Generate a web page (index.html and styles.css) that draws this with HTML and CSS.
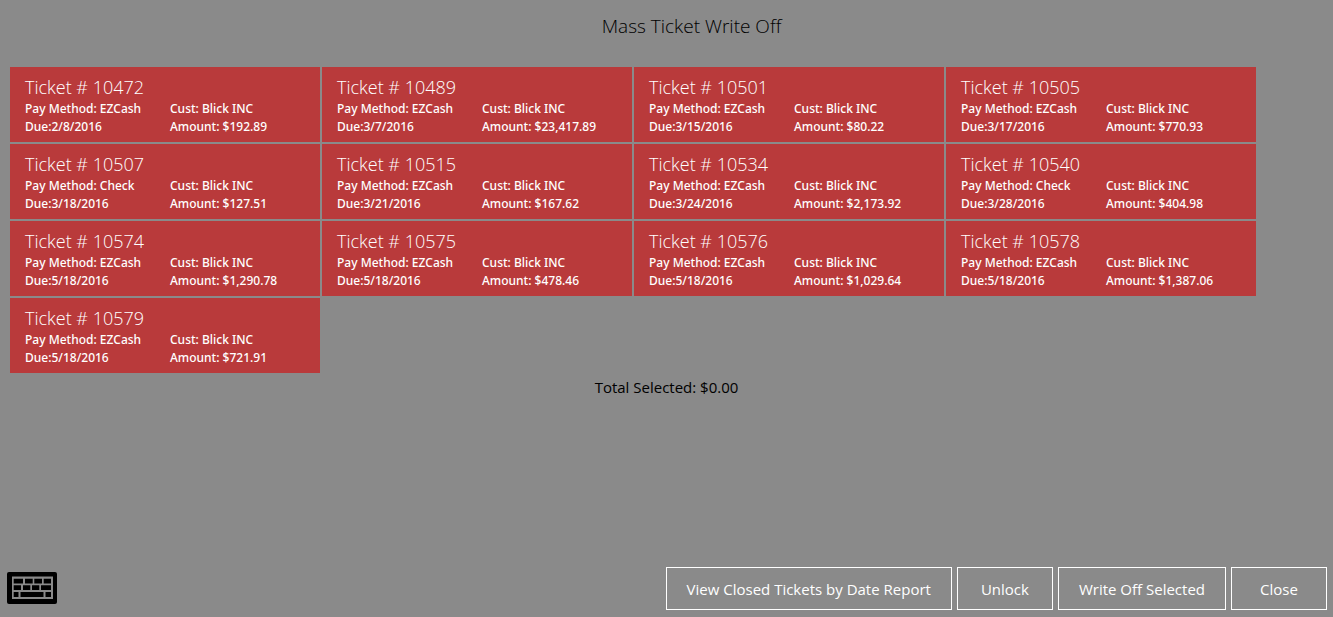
FILE: index.html
```html
<!DOCTYPE html>
<html lang="en">
<head>
    <meta charset="UTF-8">
    <meta name="viewport" content="width=device-width, initial-scale=1.0">
    <title>Mass Ticket Write Off</title>
    <link rel="stylesheet" href="styles.css">
</head>
<body>

<h1>Mass Ticket Write Off</h1>

<main>
    <div class="tickets" id="tickets"></div>
    <p class="total">Total Selected: <span id="total">$0.00</span></p>
</main>

<footer>
    <button class="keyboard" aria-label="Show keyboard">
        <svg width="50" height="32" viewBox="0 0 50 32">
            <rect width="50" height="32" rx="2" fill="#000"/>
            <rect x="5" y="4.500" width="41" height="22.500" fill="#8a8a8a"/>
            <path fill="#000" d="M6.700 6.700H16v4.800H6.700z M18 6.700h7.700v4.800H18z M27.300 6.700H35v4.800h-7.700z M36.700 6.700h7.300v4.800h-7.300z
                M6.700 13.300H14V18H6.700z M16 13.300h7.300V18H16z M25 13.300h7.300V18H25z M34 13.300h10V18H34z
                M6.700 20h4.800v5H6.700z M13.500 20h23v5h-23z M38.500 20H44v5h-5.500z"/>
        </svg>
    </button>
    <div class="actions">
        <button>View Closed Tickets by Date Report</button>
        <button id="unlock">Unlock</button>
        <button>Write Off Selected</button>
        <button>Close</button>
    </div>
</footer>

<script src="script.js"></script>
</body>
</html>
```
FILE: styles.css
```css
* {
    box-sizing: border-box;
}
body {
    display: flex;
    flex-direction: column;
    min-height: 100vh;
    margin: 0;
    background-color: #8a8a8a;
    color: #000;
    font-family: "Segoe UI", "Open Sans", sans-serif;
}
h1 {
    margin: 0;
    padding: 12px 0 27px 50px;
    font-size: 19px;
    font-weight: 300;
    line-height: 28px;
    text-align: center;
}
main {
    flex: 1;
    padding: 0 10px;
}
button {
    border: none;
    background: none;
    color: #fff;
    font-family: inherit;
    cursor: pointer;
}
.tickets {
    display: grid;
    grid-template-columns: repeat(auto-fill, 310px);
    gap: 2px;
}
.ticket {
    display: grid;
    grid-template-columns: 145px 1fr;
    padding: 7px 0 6px 15px;
    background-color: #b93a3b;
    font-family: "Segoe UI", "Noto Sans", sans-serif;
    font-size: 12px;
    font-weight: 500;
    line-height: 18px;
    text-align: left;
    white-space: nowrap;
}
.ticket.selected {
    outline: 2px solid #fff;
}
.ticket .number {
    grid-column: 1 / -1;
    font-family: "Segoe UI", "Open Sans", sans-serif;
    font-size: 18px;
    font-weight: 300;
    line-height: 26px;
}
.total {
    margin: 4px 0;
    font-size: 15px;
    line-height: 20px;
    text-align: center;
}
footer {
    display: flex;
    align-items: center;
    justify-content: space-between;
    padding: 0 6px 7px 7px;
}
.keyboard {
    padding: 0 0 2px;
}
.keyboard svg {
    display: block;
}
.actions {
    display: flex;
    gap: 5px;
}
.actions button {
    min-width: 96px;
    height: 43px;
    padding: 0 20px;
    border: 1px solid #fff;
    font-size: 15px;
}
```
FILE: script.js
```js
const tickets = [
    [10472, 'EZCash', '2/8/2016', 192.89],
    [10489, 'EZCash', '3/7/2016', 23417.89],
    [10501, 'EZCash', '3/15/2016', 80.22],
    [10505, 'EZCash', '3/17/2016', 770.93],
    [10507, 'Check', '3/18/2016', 127.51],
    [10515, 'EZCash', '3/21/2016', 167.62],
    [10534, 'EZCash', '3/24/2016', 2173.92],
    [10540, 'Check', '3/28/2016', 404.98],
    [10574, 'EZCash', '5/18/2016', 1290.78],
    [10575, 'EZCash', '5/18/2016', 478.46],
    [10576, 'EZCash', '5/18/2016', 1029.64],
    [10578, 'EZCash', '5/18/2016', 1387.06],
    [10579, 'EZCash', '5/18/2016', 721.91]
];

const list = document.getElementById('tickets');
let total = 0;

function money(value) {
    return value.toLocaleString('en-US', { style: 'currency', currency: 'USD' });
}

for (const [number, method, due, amount] of tickets) {
    const tile = document.createElement('button');
    tile.className = 'ticket';
    tile.innerHTML = `
        <span class="number">Ticket # ${number}</span>
        <span>Pay Method: ${method}</span>
        <span>Cust: Blick INC</span>
        <span>Due:${due}</span>
        <span>Amount: ${money(amount)}</span>
    `;
    tile.onclick = function () {
        // Clicking a tile again takes it out of the total
        total += tile.classList.toggle('selected') ? amount : -amount;
        document.getElementById('total').textContent = money(Math.abs(total));
    };
    list.appendChild(tile);
}
```
